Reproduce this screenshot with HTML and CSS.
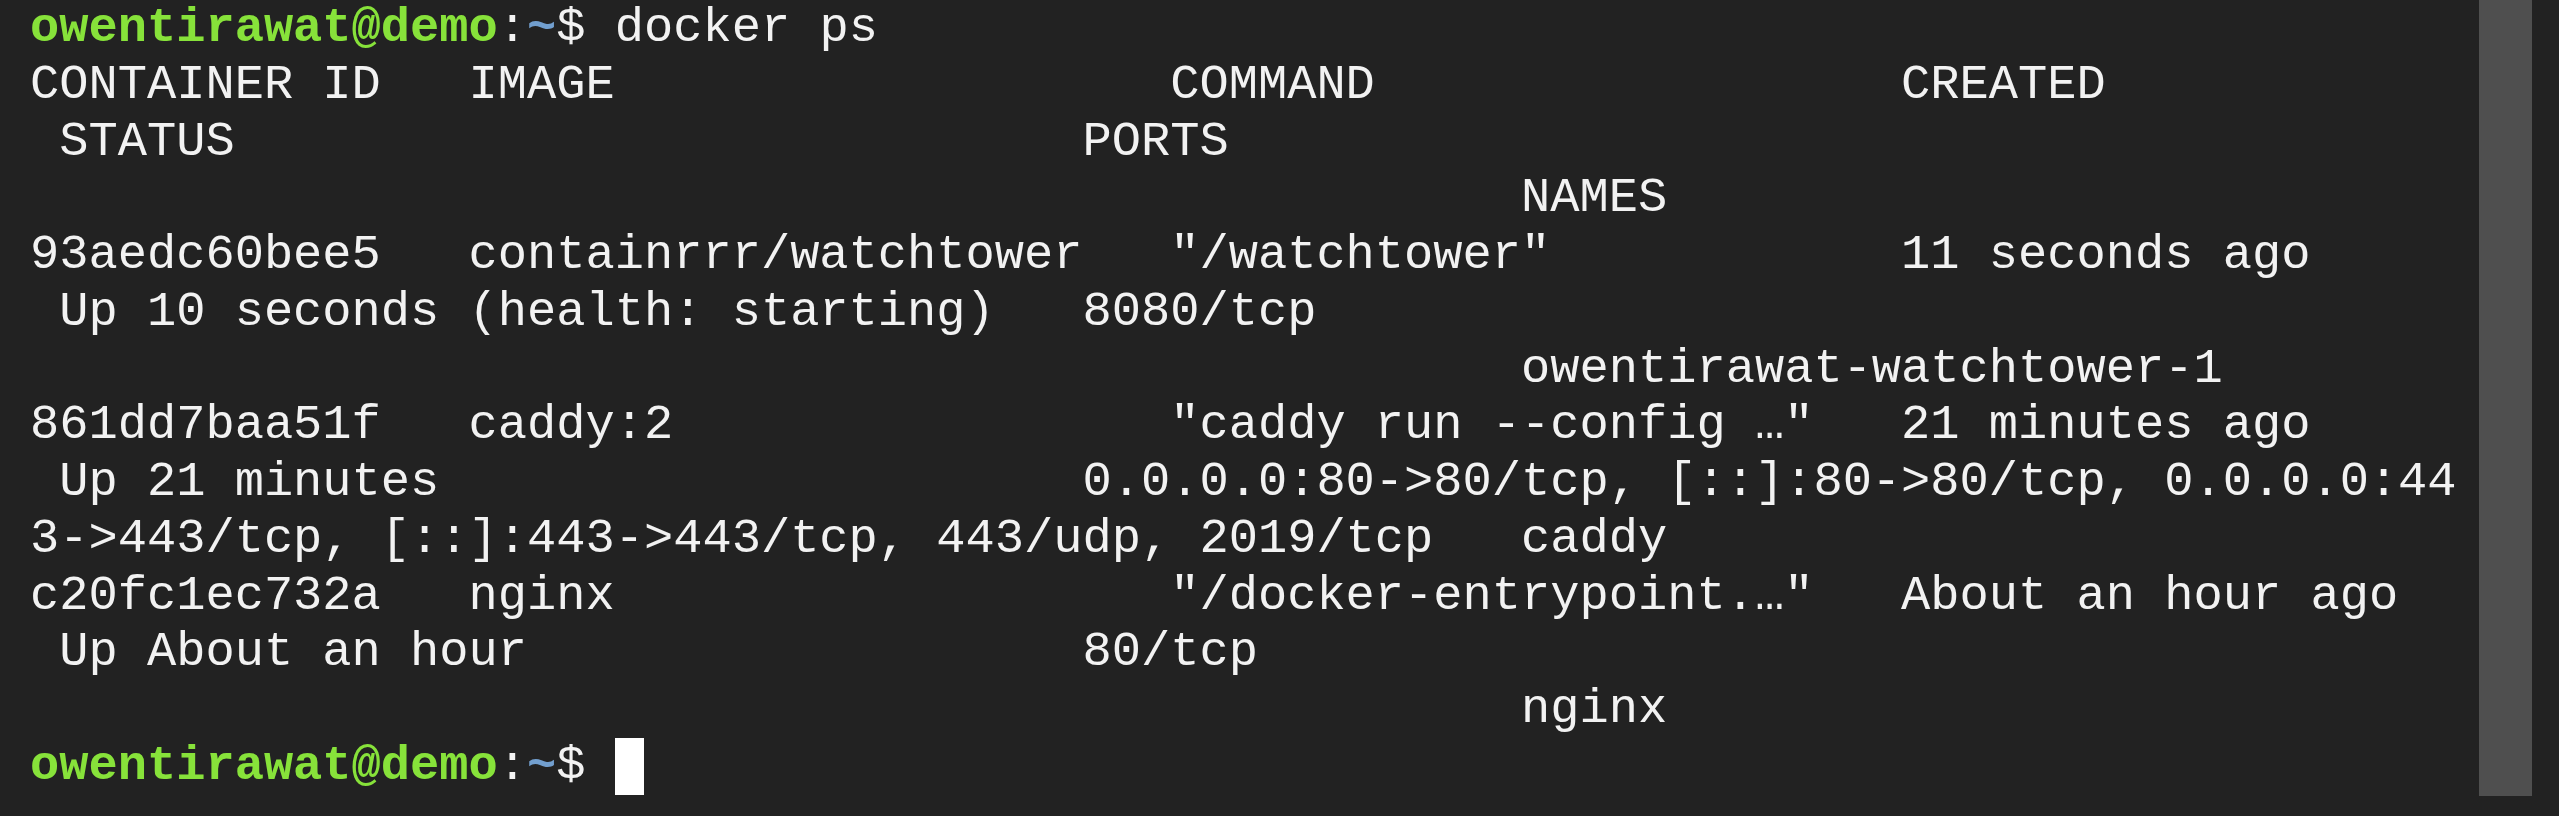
FILE: index.html
```html
<!DOCTYPE html>
<html>
<head>
<meta charset="utf-8">
<title>Terminal</title>
<link rel="stylesheet" href="styles.css">
</head>
<body>
<div class="term">
  <div class="screen">
    <div class="row"><span class="user">owentirawat@demo</span>:<span class="path">~</span>$ docker ps</div>
    <div class="row">CONTAINER ID   IMAGE                   COMMAND                  CREATED</div>
    <div class="row"> STATUS                             PORTS</div>
    <div class="row">                                                   NAMES</div>
    <div class="row">93aedc60bee5   containrrr/watchtower   "/watchtower"            11 seconds ago</div>
    <div class="row"> Up 10 seconds (health: starting)   8080/tcp</div>
    <div class="row">                                                   owentirawat-watchtower-1</div>
    <div class="row">861dd7baa51f   caddy:2                 "caddy run --config …"   21 minutes ago</div>
    <div class="row"> Up 21 minutes                      0.0.0.0:80-&gt;80/tcp, [::]:80-&gt;80/tcp, 0.0.0.0:44</div>
    <div class="row">3-&gt;443/tcp, [::]:443-&gt;443/tcp, 443/udp, 2019/tcp   caddy</div>
    <div class="row">c20fc1ec732a   nginx                   "/docker-entrypoint.…"   About an hour ago</div>
    <div class="row"> Up About an hour                   80/tcp</div>
    <div class="row">                                                   nginx</div>
    <div class="row"><span class="user">owentirawat@demo</span>:<span class="path">~</span>$ <span class="cursor"></span></div>
  </div>
  <div class="scrollbar"><div class="thumb"></div></div>
</div>
</body>
</html>
```

FILE: styles.css
```css
html, body {
  margin: 0;
  padding: 0;
  background: #222222;
  width: 2559px;
  height: 816px;
  overflow: hidden;
}

.term {
  display: flex;
  width: 2559px;
  height: 816px;
  background: #222222;
}

.screen {
  flex: 1;
  padding: 0 0 0 30px;
  font-family: "Liberation Mono", "DejaVu Sans Mono", monospace;
  font-size: 48.73px;
  line-height: 56.75px;
  color: #f2f2f2;
}

.row {
  white-space: pre;
  height: 56.75px;
}

.user {
  color: #87e23a;
  font-weight: bold;
}

.path {
  color: #729fcf;
  font-weight: bold;
}

.cursor {
  display: inline-block;
  width: 29.24px;
  height: 56.75px;
  background: #ffffff;
  vertical-align: top;
}

.scrollbar {
  width: 80px;
  padding-right: 27px;
  box-sizing: border-box;
  display: flex;
  justify-content: flex-end;
  align-items: flex-start;
}

.thumb {
  width: 53px;
  height: 796px;
  background: #4f4f4f;
}
```
